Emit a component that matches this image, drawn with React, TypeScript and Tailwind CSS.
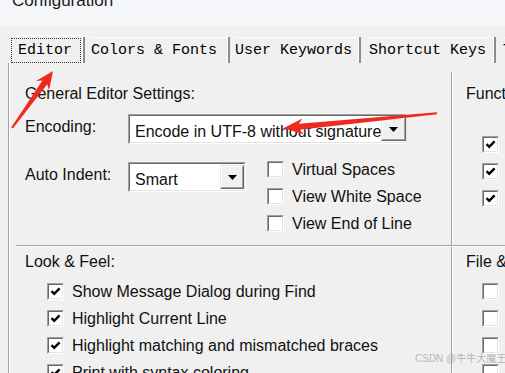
import type { ReactNode } from 'react'

function Check({ checked = false }: { checked?: boolean }) {
  return (
    <span className="flex h-[17px] w-[17px] shrink-0 border border-t-[#a0a0a0] border-l-[#a0a0a0] border-r-white border-b-white">
      <span className="flex flex-1 items-center justify-center border border-t-[#696969] border-l-[#696969] border-r-[#e3e3e3] border-b-[#e3e3e3] bg-white">
        {checked && (
          <svg width="11" height="9" viewBox="0 0 11 9">
            <path d="M1.5 4.2 L4.2 6.8 L9.6 1.4" fill="none" stroke="#000" strokeWidth="2.4" />
          </svg>
        )}
      </span>
    </span>
  )
}

function DropButton({ className }: { className: string }) {
  return (
    <span className={`my-[1px] flex border border-t-[#e3e3e3] border-l-[#e3e3e3] border-r-[#696969] border-b-[#696969] ${className}`}>
      <span className="flex flex-1 items-center justify-center border border-t-white border-l-white border-r-[#a0a0a0] border-b-[#a0a0a0] bg-[#f0f0f0]">
        <svg width="9" height="5" viewBox="0 0 9 5">
          <path d="M0 0h9L4.5 5z" fill="#000" />
        </svg>
      </span>
    </span>
  )
}

function Combo({ value, className, btn }: { value: string; className: string; btn: string }) {
  return (
    <div className={`flex h-[30px] border border-t-[#a0a0a0] border-l-[#a0a0a0] border-r-white border-b-white ${className}`}>
      <div className="flex flex-1 border border-t-[#696969] border-l-[#696969] border-r-[#e3e3e3] border-b-[#e3e3e3] bg-white">
        <span className="flex-1 overflow-hidden whitespace-nowrap pl-[5px] pt-[7px] leading-[18px]">{value}</span>
        <DropButton className={btn} />
      </div>
    </div>
  )
}

function CheckRow({ checked, label }: { checked?: boolean; label: string }) {
  return (
    <div className="flex h-[27px] items-center">
      <Check checked={checked} />
      <span className="ml-[8px] whitespace-nowrap leading-[18px]">{label}</span>
    </div>
  )
}

function Tab({ children, className, selected }: { children: ReactNode; className: string; selected?: boolean }) {
  if (selected) {
    return (
      <div className={`relative shrink-0 border-t border-white pt-[6px] ${className}`}>
        <span className="pointer-events-none absolute left-[1px] right-[1px] top-[2px] bottom-0 border border-dotted border-[#333]" />
        {children}
      </div>
    )
  }
  return (
    <div className={`shrink-0 pt-[2px] ${className}`}>
      <div className="h-full border-t border-white pt-[4px]">{children}</div>
    </div>
  )
}

function TabSep() {
  return (
    <div className="mt-[2px] flex w-[3px] shrink-0">
      <span className="w-px bg-white" />
      <span className="w-[2px] bg-[#8c8c8c]" />
    </div>
  )
}

function VLine({ className = '' }: { className?: string }) {
  return (
    <div className={`flex w-[2px] shrink-0 ${className}`}>
      <span className="w-px bg-[#a0a0a0]" />
      <span className="w-px bg-white" />
    </div>
  )
}

export default function App() {
  return (
    <div className="relative flex h-[373px] w-[505px] flex-col overflow-hidden bg-[#f0f0f0] font-['Liberation_Sans',Arial,sans-serif] text-[16px] text-[#111]">
      {/* window title */}
      <div className="h-[26px] shrink-0 overflow-hidden bg-[#f4f6f9] pl-[12px]">
        <div className="-mt-[9px] text-[17px] leading-[20px] text-[#1b1b1b]">Configuration</div>
      </div>

      {/* tabs */}
      <div className="mt-[9px] flex h-[28px] shrink-0 font-['Liberation_Mono',monospace] text-[15px] leading-[17px] text-black">
        <div className="w-[10px] shrink-0" />
        <Tab selected className="w-[72px] pl-[8px]">Editor</Tab>
        <TabSep />
        <Tab className="w-[142px] pl-[6px]">Colors &amp; Fonts</Tab>
        <TabSep />
        <Tab className="w-[128px] pl-[5px]">User Keywords</Tab>
        <TabSep />
        <Tab className="w-[132px] pl-[8px]">Shortcut Keys</Tab>
        <TabSep />
        <Tab className="w-[60px] pl-[7px]">Tools</Tab>
      </div>

      {/* tab page */}
      <div className="ml-[8px] flex flex-1 flex-col border-l border-[#a0a0a0]">
        <div className="flex flex-1 flex-col border-l border-white">
          <div className="flex h-[182px] shrink-0">
            {/* General Editor Settings */}
            <div className="w-[441px] shrink-0 pl-[15px]">
              <div className="mt-[22px] leading-[18px]">General Editor Settings:</div>
              <div className="mt-[11px] flex">
                <div className="mt-[4px] w-[103px] shrink-0 leading-[18px]">Encoding:</div>
                <Combo value="Encode in UTF-8 without signature" className="w-[278px]" btn="w-[25px]" />
              </div>
              <div className="mt-[12px] flex">
                <div className="mt-[6px] flex">
                  <div className="mt-[4px] w-[103px] shrink-0 leading-[18px]">Auto Indent:</div>
                  <Combo value="Smart" className="w-[118px]" btn="w-[24px]" />
                </div>
                <div className="ml-[21px] flex flex-col">
                  <CheckRow label="Virtual Spaces" />
                  <CheckRow label="View White Space" />
                  <CheckRow label="View End of Line" />
                </div>
              </div>
            </div>
            <VLine className="mt-[9px]" />
            {/* Functions */}
            <div className="flex-1 overflow-hidden pl-[13px]">
              <div className="mt-[22px] whitespace-nowrap leading-[18px]">Functions:</div>
              <div className="mt-[28px] flex flex-col pl-[16px]">
                <CheckRow checked label="Auto Complete" />
                <CheckRow checked label="Word Wrap" />
                <CheckRow checked label="Line Numbers" />
              </div>
            </div>
          </div>

          {/* group divider */}
          <div className="ml-[6px] flex shrink-0 flex-col">
            <span className="h-px bg-[#a0a0a0]" />
            <span className="h-px bg-white" />
          </div>

          <div className="flex flex-1">
            {/* Look & Feel */}
            <div className="w-[441px] shrink-0 pl-[15px]">
              <div className="mt-[6px] leading-[18px]">Look &amp; Feel:</div>
              <div className="mt-[7px] flex flex-col pl-[22px]">
                <CheckRow checked label="Show Message Dialog during Find" />
                <CheckRow checked label="Highlight Current Line" />
                <CheckRow checked label="Highlight matching and mismatched braces" />
                <CheckRow checked label="Print with syntax coloring" />
              </div>
            </div>
            <VLine />
            {/* File & Encoding */}
            <div className="flex-1 overflow-hidden pl-[13px]">
              <div className="mt-[6px] whitespace-nowrap leading-[18px]">File &amp; Encoding:</div>
              <div className="mt-[7px] flex flex-col pl-[16px]">
                <CheckRow label="Auto Reload" />
                <CheckRow label="Backup" />
                <CheckRow label="Remember Files" />
                <CheckRow label="Trim Spaces" />
              </div>
            </div>
          </div>
        </div>
      </div>

      {/* watermark */}
      <div className="pointer-events-none absolute left-[415px] top-[352px] whitespace-nowrap font-['Liberation_Sans','Noto_Sans_CJK_SC',sans-serif] text-[10px] leading-[14px] text-[#a6a6a6]/80">
        CSDN @牛牛大魔王
      </div>

      {/* annotation arrows */}
      <svg className="pointer-events-none absolute left-0 top-0" width="505" height="373" viewBox="0 0 505 373">
        <path
          d="M11.2 127.4 L42.4 80.6 L36 80.9 L53 71 L49 90.3 L47.2 84.2 L12.8 128.6 Z"
          fill="#ee2a1f"
        />
        <path
          d="M436.9 112.3 L298.9 123.7 L302.4 118.4 L283.3 128.3 L304 134.3 L299.5 129.7 L437.1 114.3 Z"
          fill="#ee2a1f"
        />
      </svg>
    </div>
  )
}
